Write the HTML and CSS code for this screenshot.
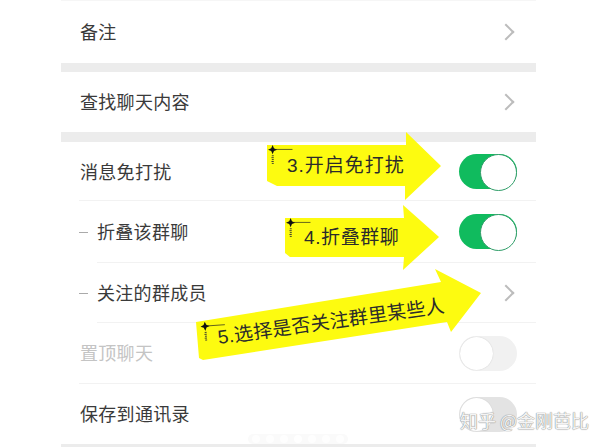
FILE: index.html
```html
<!DOCTYPE html>
<html lang="zh-CN">
<head>
    <meta charset="UTF-8">
    <title>聊天信息</title>
    <link rel="stylesheet" href="styles.css">
</head>
<body>
    <svg class="defs" width="0" height="0">
        <symbol id="spark" viewBox="0 0 34 26">
            <path d="M6 0l1.800 4.200L12 6 7.800 7.800 6 12 4.200 7.800 0 6l4.200-1.800z" fill="#111"/>
            <path d="M10 5.700h22" stroke="#222" stroke-width="0.900"/>
            <path d="M5 14h2.500M4.500 16.500h3M5 19h2.500M4.500 21.500h3M5 24h2.500" stroke="#333" stroke-width="1.200"/>
        </symbol>
    </svg>

    <div class="screen">
        <div class="group">
            <div class="row line-top"><span>备注</span><i class="chevron"></i></div>
        </div>
        <div class="group">
            <div class="row short"><span>查找聊天内容</span><i class="chevron"></i></div>
        </div>
        <div class="group last">
            <div class="row first line-bottom">
                <span>消息免打扰</span><i class="switch on"></i>
            </div>
            <div class="row tall sub line-bottom">
                <b class="dash"></b><span>折叠该群聊</span><i class="switch on"></i>
            </div>
            <div class="row short sub line-bottom">
                <b class="dash"></b><span>关注的群成员</span><i class="chevron"></i>
            </div>
            <div class="row tall line-bottom">
                <span class="muted">置顶聊天</span><i class="switch off"></i>
            </div>
            <div class="row short">
                <span>保存到通讯录</span><i class="switch off dark"></i>
            </div>
        </div>
    </div>

    <div class="dots"><i></i><i></i><i></i><i class="big"></i><i></i><i></i><i></i></div>

    <!-- yellow arrows drawn on top of the screenshot -->
    <div class="note note-3">
        <svg viewBox="0 0 176 70" width="176" height="70"><polygon points="2,14 141,14 141,1 176,35 140,69 140,55 12,55 2,50"/><use href="#spark" x="3" y="14" width="26" height="20"/></svg>
        <span class="note-text">3.开启免打扰</span>
    </div>
    <div class="note note-4">
        <svg viewBox="0 0 156 68" width="156" height="68"><polygon points="1,14 120,14 119,1 155,33 119,66 120,53 6,53 1,49"/><use href="#spark" x="2" y="14" width="26" height="20"/></svg>
        <span class="note-text">4.折叠群聊</span>
    </div>
    <div class="note note-5">
        <svg viewBox="0 0 290 94" width="290" height="94"><polygon points="1,54 246,14 240,1 286,25 256,64 252,54 8,92 4,90"/><use href="#spark" x="5" y="52" width="26" height="24" transform="rotate(-4 5 52)"/></svg>
        <span class="note-text">5.选择是否关注群里某些人</span>
    </div>

    <div class="watermark">知乎 @金刚芭比</div>
</body>
</html>
```

FILE: styles.css
```css
* {
    margin: 0;
    padding: 0;
    box-sizing: border-box;
}

body {
    width: 608px;
    height: 447px;
    background: white;
    font-family: 'Noto Sans CJK SC', 'Noto Sans', sans-serif;
    overflow: hidden;
    position: relative;
}

.defs {
    position: absolute;
}

.screen {
    width: 475px;
    height: 447px;
    margin-left: 61px;
    background: #ececec;
    display: flex;
    flex-direction: column;
    gap: 9px;
}

.group {
    background: white;
}

.group.last {
    margin-top: 1px;
    height: 302px;
}

.row {
    height: 63px;
    padding: 0 19px 2px;
    display: flex;
    align-items: center;
    justify-content: space-between;
    position: relative;
    font-size: 18px;
    letter-spacing: 0.3px;
    color: #3a3a3a;
}

.row.short {
    height: 60px;
}

.row.first {
    height: 59px;
}

.row.tall {
    height: 61.5px;
}

.row.sub {
    padding-left: 36px;
    justify-content: flex-start;
}

.row.sub .chevron,
.row.sub .switch {
    margin-left: auto;
}

.line-top {
    border-top: 1px solid #f6f6f6;
}

.line-bottom::after {
    content: "";
    position: absolute;
    left: 18px;
    right: 0;
    bottom: 0;
    height: 1px;
    background: #f2f2f2;
}

.sub.line-bottom::after {
    left: 36px;
}

.muted {
    color: #c4c4c4;
}

.dash {
    position: absolute;
    left: 18px;
    top: 50%;
    width: 9px;
    height: 1px;
    background: #aaa;
}

.chevron {
    width: 12px;
    height: 12px;
    margin-top: 2px;
    margin-right: 5px;
    border-top: 2px solid #bcbcbc;
    border-right: 2px solid #bcbcbc;
    transform: rotate(45deg);
}

.switch {
    width: 58px;
    height: 35px;
    margin-top: 2px;
    border-radius: 18px;
    position: relative;
}

.switch::after {
    content: "";
    position: absolute;
    top: 1px;
    width: 33px;
    height: 33px;
    border-radius: 50%;
    background: white;
}

.switch.on {
    background: #10bb5e;
}

.switch.on::after {
    right: 0;
    top: 0;
    width: 35px;
    height: 35px;
    border: 1.5px solid #2f9d68;
}

.switch.off {
    background: #f1f1f1;
}

.switch.off::after {
    left: 1px;
    box-shadow: 0 0 1px #bbb;
}

.switch.dark {
    background: #e3e3e3;
}

.dots {
    position: absolute;
    left: 248px;
    top: 434px;
    padding: 1px 4px;
    background: #fafafa;
    border-radius: 5px;
    display: flex;
    align-items: center;
    gap: 6px;
}

.dots i {
    width: 8px;
    height: 8px;
    border-radius: 50%;
    background: #fefefe;
}

.dots i.big {
    background: white;
}

.note {
    position: absolute;
}

.note svg {
    display: block;
    overflow: visible;
}

.note polygon {
    fill: #fdfb10;
}

.note-text {
    position: absolute;
    font-family: 'Liberation Sans', 'Noto Sans CJK SC', sans-serif;
    font-size: 19px;
    line-height: 24px;
    white-space: nowrap;
    color: #2b2b2b;
}

.note-3 {
    left: 265px;
    top: 131px;
}

.note-3 .note-text {
    left: 22px;
    top: 23px;
    letter-spacing: 1px;
}

.note-4 {
    left: 284px;
    top: 204px;
}

.note-4 .note-text {
    left: 20px;
    top: 22px;
    letter-spacing: 0.6px;
}

.note-5 {
    left: 195px;
    top: 268px;
}

.note-5 .note-text {
    left: 23px;
    top: 58px;
    transform: rotate(-8deg);
    transform-origin: left center;
    letter-spacing: 0.3px;
}

.watermark {
    position: absolute;
    left: 460px;
    top: 407px;
    font-size: 18px;
    line-height: 26px;
    white-space: nowrap;
    color: #f4f4f4;
    text-shadow: 0 0 1px #888, 0 0 1px #888;
}
```
